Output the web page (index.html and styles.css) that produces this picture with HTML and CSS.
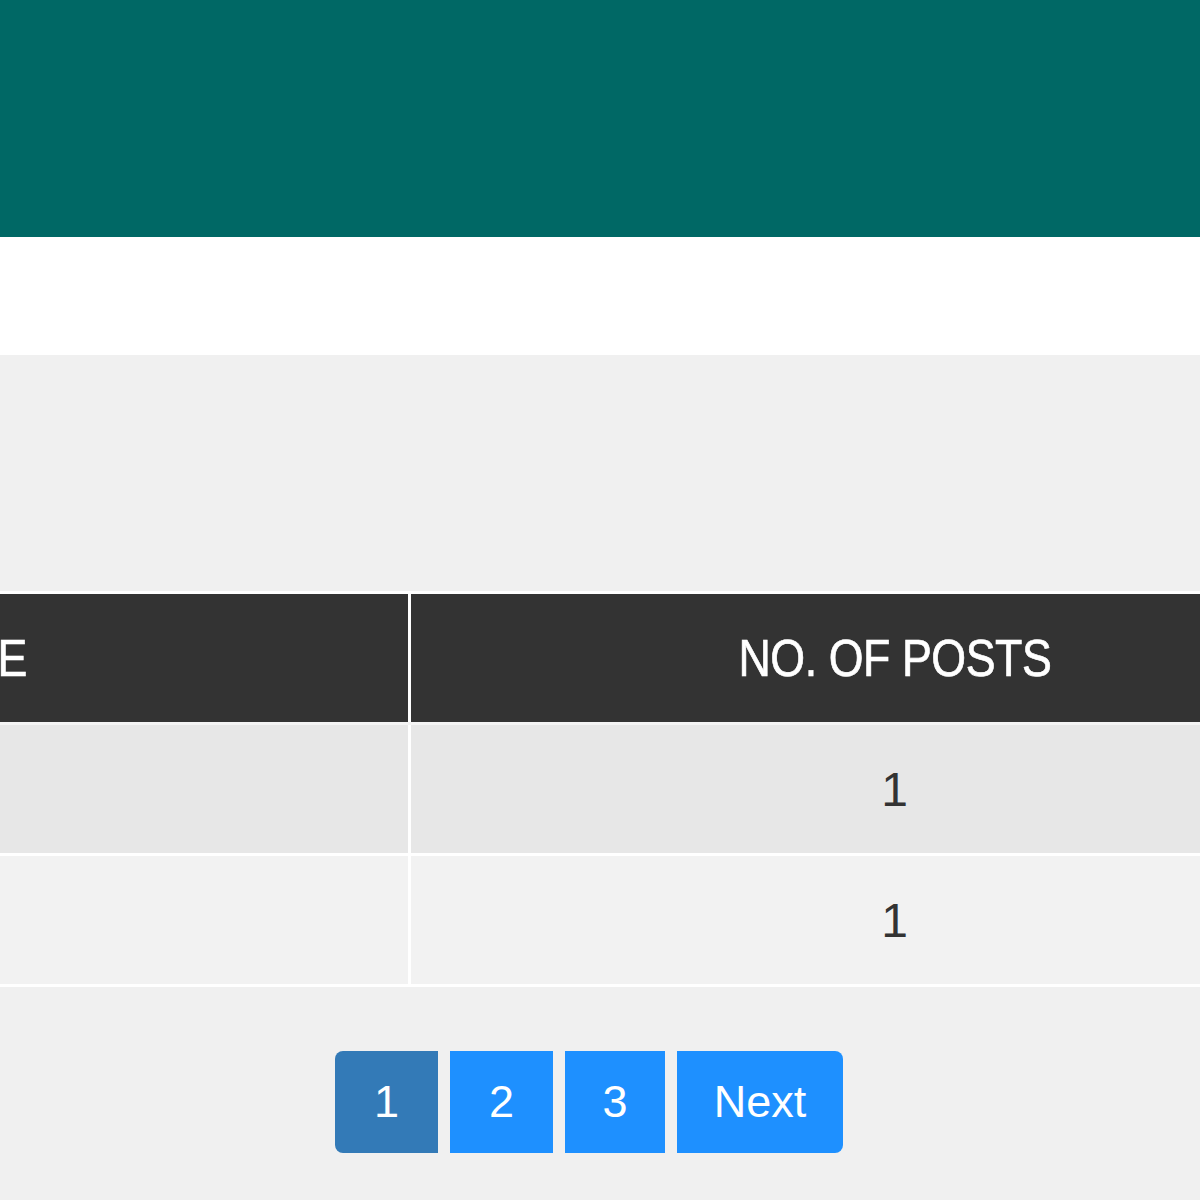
FILE: index.html
```html
<!DOCTYPE html>
<html lang="en">
<head>
<meta charset="utf-8">
<title>Tags</title>
<link rel="stylesheet" href="styles.css">
</head>
<body>
<header class="topbar"></header>
<nav class="subbar"></nav>
<main class="content">
  <div class="table-wrap">
    <table class="posts-table">
      <colgroup>
        <col class="col-name">
        <col class="col-count">
      </colgroup>
      <thead>
        <tr>
          <th><span class="head-text">NAME</span></th>
          <th><span class="head-text">NO. OF POSTS</span></th>
        </tr>
      </thead>
      <tbody>
        <tr class="row-odd">
          <td></td>
          <td>1</td>
        </tr>
        <tr class="row-even">
          <td></td>
          <td>1</td>
        </tr>
      </tbody>
    </table>
  </div>
  <div class="pagination">
    <a class="page-btn active first">1</a>
    <a class="page-btn">2</a>
    <a class="page-btn narrow">3</a>
    <a class="page-btn last">Next</a>
  </div>
</main>
</body>
</html>
```
FILE: styles.css
```css
html, body {
  margin: 0;
  padding: 0;
}
body {
  background: #f0f0f0;
  font-family: "Liberation Sans", Arial, sans-serif;
  color: #333333;
  overflow-x: hidden;
}
.topbar {
  height: 237px;
  background: #006865;
}
.subbar {
  height: 118px;
  background: #ffffff;
}
.content {
  padding-top: 236px;
  padding-bottom: 47px;
}
.table-wrap {
  overflow: hidden;
  width: 1200px;
}
.posts-table {
  margin-left: -484px;
  width: 1862px;
  table-layout: fixed;
  border-collapse: collapse;
  border: 3px solid #ffffff;
}
.col-name { width: 892px; }
.col-count { width: 970px; }
.posts-table th,
.posts-table td {
  border: 3px solid #ffffff;
  text-align: center;
  padding: 0;
}
.posts-table th {
  height: 128px;
  background: #333333;
  color: #ffffff;
  font-weight: normal;
  font-size: 52px;
  border-bottom-color: #f4f4f4;
}
.head-text {
  display: inline-block;
  transform: scaleX(0.86);
  letter-spacing: -0.5px;
  -webkit-text-stroke: 0.7px #ffffff;
}
.posts-table td {
  height: 128px;
  font-size: 48px;
  color: #333333;
}
.row-odd td { background: #e7e7e7; }
.row-even td { background: #f2f2f2; }
.pagination {
  display: flex;
  justify-content: center;
  gap: 12px;
  margin-top: 64px;
  padding-right: 22px;
}
.page-btn {
  display: flex;
  align-items: center;
  justify-content: center;
  height: 102px;
  width: 103px;
  box-sizing: border-box;
  background: #1e90ff;
  color: #ffffff;
  font-size: 45px;
  text-decoration: none;
}
.page-btn.narrow {
  width: 100px;
}
.page-btn.active {
  background: #337ab7;
}
.page-btn.first {
  border-radius: 8px 0 0 8px;
}
.page-btn.last {
  width: 166px;
  border-radius: 0 8px 8px 0;
}
```
